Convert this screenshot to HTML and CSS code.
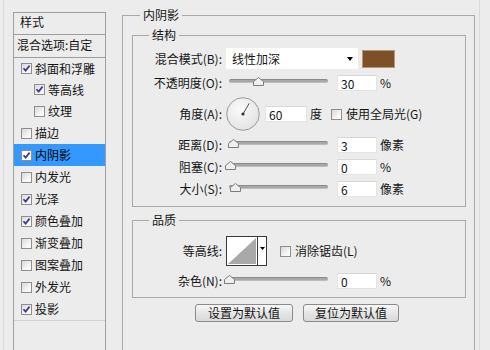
FILE: index.html
```html
<!DOCTYPE html>
<html lang="zh-CN">
<head>
<meta charset="utf-8">
<title>图层样式</title>
<link rel="stylesheet" href="styles.css">
</head>
<body>
<div class="dialog">
  <div class="sidebar">
    <div class="side-head">样式</div>
    <div class="side-blend">混合选项:自定</div>
    <ul class="list">
      <li class="item short"><span class="cb on"><svg viewBox="0 0 9 9"><path d="M1.5 4.2 L3.6 6.6 L7.6 1.6"/></svg></span>斜面和浮雕</li>
      <li class="item short sub"><span class="cb on"><svg viewBox="0 0 9 9"><path d="M1.5 4.2 L3.6 6.6 L7.6 1.6"/></svg></span>等高线</li>
      <li class="item sub"><span class="cb"></span>纹理</li>
      <li class="item"><span class="cb"></span>描边</li>
      <li class="item active"><span class="cb on"><svg viewBox="0 0 9 9"><path d="M1.5 4.2 L3.6 6.6 L7.6 1.6"/></svg></span>内阴影</li>
      <li class="item"><span class="cb"></span>内发光</li>
      <li class="item"><span class="cb on"><svg viewBox="0 0 9 9"><path d="M1.5 4.2 L3.6 6.6 L7.6 1.6"/></svg></span>光泽</li>
      <li class="item"><span class="cb on"><svg viewBox="0 0 9 9"><path d="M1.5 4.2 L3.6 6.6 L7.6 1.6"/></svg></span>颜色叠加</li>
      <li class="item"><span class="cb"></span>渐变叠加</li>
      <li class="item"><span class="cb"></span>图案叠加</li>
      <li class="item"><span class="cb"></span>外发光</li>
      <li class="item"><span class="cb on"><svg viewBox="0 0 9 9"><path d="M1.5 4.2 L3.6 6.6 L7.6 1.6"/></svg></span>投影</li>
    </ul>
  </div>

  <div class="main">
    <div class="outer">
      <div class="gtitle outer-title">内阴影</div>

      <div class="group">
        <div class="gtitle">结构</div>
        <div class="grid">
          <label class="lbl">混合模式(B):</label>
          <div class="ctl">
            <div class="select"><span>线性加深</span><span class="arrow"></span></div>
            <div class="swatch"></div>
          </div>

          <label class="lbl">不透明度(O):</label>
          <div class="ctl">
            <div class="slider"><div class="track"></div><svg class="thumb" style="left:27px" viewBox="0 0 11 9"><path d="M0.5 8.5 V4.5 L5.5 0.5 L10.5 4.5 V8.5 Z"/></svg></div>
            <div class="input">30</div><span class="unit">%</span>
          </div>

          <label class="lbl">角度(A):</label>
          <div class="ctl">
            <svg class="dial" viewBox="0 0 34 34">
              <defs><radialGradient id="dg" cx="0.4" cy="0.35" r="0.7"><stop offset="0" stop-color="#fafafa"/><stop offset="1" stop-color="#e2e2e2"/></radialGradient></defs>
              <circle cx="17" cy="17" r="16.3" fill="url(#dg)" stroke="#9a9a9a" stroke-width="1"/>
              <line x1="17" y1="17" x2="23.2" y2="6.3" stroke="#555" stroke-width="1"/>
              <circle cx="17" cy="17" r="1.6" fill="#333"/>
            </svg>
            <div class="input wide">60</div><span class="unit">度</span>
            <span class="cb gl"></span><span class="cblabel">使用全局光(G)</span>
          </div>

          <label class="lbl">距离(D):</label>
          <div class="ctl">
            <div class="slider"><div class="track"></div><svg class="thumb" style="left:2px" viewBox="0 0 11 9"><path d="M0.5 8.5 V4.5 L5.5 0.5 L10.5 4.5 V8.5 Z"/></svg></div>
            <div class="input">3</div><span class="unit">像素</span>
          </div>

          <label class="lbl">阻塞(C):</label>
          <div class="ctl">
            <div class="slider"><div class="track"></div><svg class="thumb" style="left:-1px" viewBox="0 0 11 9"><path d="M0.5 8.5 V4.5 L5.5 0.5 L10.5 4.5 V8.5 Z"/></svg></div>
            <div class="input">0</div><span class="unit">%</span>
          </div>

          <label class="lbl">大小(S):</label>
          <div class="ctl">
            <div class="slider"><div class="track"></div><svg class="thumb" style="left:4px" viewBox="0 0 11 9"><path d="M0.5 8.5 V4.5 L5.5 0.5 L10.5 4.5 V8.5 Z"/></svg></div>
            <div class="input">6</div><span class="unit">像素</span>
          </div>
        </div>
      </div>

      <div class="group quality">
        <div class="gtitle">品质</div>
        <div class="grid q">
          <label class="lbl">等高线:</label>
          <div class="ctl">
            <svg class="contour" viewBox="0 0 41 30">
              <rect x="0.5" y="0.5" width="40" height="29" fill="#fff" stroke="#3a3a3a"/>
              <polygon points="2,28 30,2 30,28" fill="#a9a9a9"/>
              <line x1="31.5" y1="1" x2="31.5" y2="29" stroke="#3a3a3a"/>
              <polygon points="34,11 39,11 36.5,14" fill="#000"/>
            </svg>
            <span class="cb aa"></span><span class="cblabel">消除锯齿(L)</span>
          </div>

          <label class="lbl">杂色(N):</label>
          <div class="ctl">
            <div class="slider"><div class="track"></div><svg class="thumb" style="left:-2px" viewBox="0 0 11 9"><path d="M0.5 8.5 V4.5 L5.5 0.5 L10.5 4.5 V8.5 Z"/></svg></div>
            <div class="input">0</div><span class="unit">%</span>
          </div>
        </div>
      </div>

      <div class="buttons">
        <button class="btn b1">设置为默认值</button>
        <button class="btn b2">复位为默认值</button>
      </div>
    </div>
  </div>
</div>
</body>
</html>
```

FILE: styles.css
```css
* { box-sizing: border-box; margin: 0; padding: 0; }

body {
  background: #ececec;
  font-family: "Noto Sans CJK SC", "Noto Sans", sans-serif;
  font-size: 12px;
  line-height: 14px;
  color: #151515;
  width: 490px;
  height: 350px;
  overflow: hidden;
}

.dialog {
  display: flex;
  align-items: flex-start;
  margin-left: 3px;
  width: 477px;
  height: 350px;
  border-left: 1px solid #dadada;
  border-right: 1px solid #dadada;
  padding: 12px 3px 0 9px;
}

/* ---------- sidebar ---------- */
.sidebar {
  flex: none;
  width: 93px;
  height: 350px;
  border: 1px solid #9e9e9e;
}

.side-head {
  height: 22px;
  line-height: 17px;
  padding: 0 0 0 6px;
  border-bottom: 1px solid #9e9e9e;
}

.side-blend {
  height: 23px;
  line-height: 20px;
  padding-left: 3px;
  border-bottom: 1px solid #9e9e9e;
}

.list {
  list-style: none;
  border-bottom: 1px solid #d2d2d2;
}

.item {
  display: flex;
  align-items: center;
  gap: 3px;
  height: 22px;
  padding-left: 7px;
}

.item.short { height: 21px; }
.item.sub { padding-left: 20px; }
.item.active { background: #3399ff; color: #000; }

.cb {
  flex: none;
  display: flex;
  align-items: center;
  justify-content: center;
  width: 11px;
  height: 11px;
  border: 1px solid #8e8e8e;
  background: linear-gradient(135deg, #d8d8d8, #f8f8f8 70%);
}

.cb svg {
  width: 9px;
  height: 9px;
  fill: none;
  stroke: #3b3b8c;
  stroke-width: 1.7;
}

.item.active .cb { background: #fff; }

/* ---------- main ---------- */
.main {
  flex: none;
  width: 353px;
  margin: 3px 0 0 16px;
}

.outer {
  height: 340px;
  border: 1px solid #a9a9a9;
  border-bottom: none;
  padding: 0 8px 0 9px;
}

.gtitle {
  width: fit-content;
  margin: -8px 0 0 16px;
  padding: 0 3px;
  line-height: 14px;
  background: #ececec;
}

.gtitle.outer-title { margin-left: 8px; }

.group {
  margin-top: 13px;
  border: 1px solid #a9a9a9;
}

.grid {
  display: grid;
  grid-template-columns: 89px auto;
  column-gap: 4px;
  row-gap: 6px;
  align-items: center;
  padding: 6px 0 9px;
}

.grid.q {
  row-gap: 7px;
  padding: 9px 0 8px;
}

.lbl {
  text-align: right;
  white-space: nowrap;
}

.ctl {
  display: flex;
  align-items: center;
}

.select {
  display: flex;
  align-items: center;
  justify-content: space-between;
  width: 132px;
  height: 21px;
  padding: 0 5px 0 6px;
  background: #fff;
}

.arrow {
  width: 0;
  height: 0;
  border-left: 3px solid transparent;
  border-right: 3px solid transparent;
  border-top: 4px solid #000;
}

.swatch {
  width: 33px;
  height: 18px;
  margin-left: 4px;
  background: #7c5129;
  border: 1px solid #b89670;
}

.slider {
  position: relative;
  flex: none;
  width: 107px;
  height: 16px;
}

.track {
  width: 99px;
  height: 4px;
  margin: 4px 0 0 3px;
  border-radius: 2px;
  background: #a8a8a8;
  border-top: 1px solid #8a8a8a;
  border-bottom: 1px solid #bdbdbd;
}

.thumb {
  position: absolute;
  top: 2px;
  width: 11px;
  height: 9px;
  fill: #efefef;
  stroke: #7d7d7d;
  stroke-width: 1;
}

.input {
  width: 40px;
  height: 16px;
  margin-left: 4px;
  padding-left: 3px;
  line-height: 16px;
  background: #fff;
  border: 1px solid #e4e4e4;
  border-top-color: #d8d8d8;
}

.input.wide { width: 42px; margin-left: 5px; }

.unit { margin-left: 3px; }

.dial {
  flex: none;
  width: 34px;
  height: 34px;
}

.cb.gl { margin-left: 9px; }
.cb.aa { margin-left: 13px; }

.cblabel { margin-left: 4px; white-space: nowrap; }

.contour {
  flex: none;
  width: 41px;
  height: 30px;
}

/* ---------- buttons ---------- */
.buttons {
  display: flex;
  gap: 10px;
  margin-top: 6px;
  padding-left: 63px;
}

.btn {
  height: 18px;
  font-family: inherit;
  font-size: 12px;
  line-height: 14px;
  color: #151515;
  border: 1px solid #8a8a8a;
  border-radius: 3px;
  background: linear-gradient(#f7f7f7, #e6e6e6 50%, #d9d9d9);
}

.btn.b1 { width: 98px; }
.btn.b2 { width: 96px; }
```
